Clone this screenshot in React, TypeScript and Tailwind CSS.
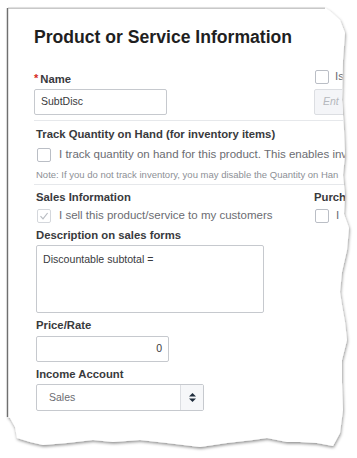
import React from "react";

const paperPath =
  "M8,8 L325,8 L330,11 L340,20 L345,33 L343,60 L342,100 L344,130 L345,155 L343,175 L345,195 L344,214 L349,228 L347,250 L342,272 L340,292 L342,305 L345,322 L347,340 L342,360 L342,383 L343,410 L340,433 L333,446 L317,443 L300,442 L287,442 L267,438 L253,440 L227,443 L200,447 L167,443 L140,440 L113,442 L93,440 L67,443 L43,445 L30,442 L17,438 L15,427 L10,418 L8,417 Z";

function Checkbox({ checked = false }: { checked?: boolean }) {
  return (
    <span
      className={`flex h-[14px] w-[14px] shrink-0 items-center justify-center rounded-[2px] border bg-white ${
        checked ? "border-[#d4d7dc]" : "border-[#babec5]"
      }`}
    >
      {checked && (
        <svg width="10" height="10" viewBox="0 0 10 10">
          <path d="M1.5 5.2 L4 7.8 L8.6 2" fill="none" stroke="#b8bcc2" strokeWidth="1.2" />
        </svg>
      )}
    </span>
  );
}

function Label({ children }: { children: React.ReactNode }) {
  return (
    <div className="h-[14px] text-[11.3px] leading-[14px] font-bold whitespace-nowrap text-[#393a3d]">
      {children}
    </div>
  );
}

export default function App() {
  return (
    <div className="relative h-[458px] w-[357px] overflow-hidden bg-white font-['Liberation_Sans',Arial,sans-serif]">
      {/* torn paper */}
      <svg className="absolute inset-0" width="357" height="458" viewBox="0 0 357 458">
        <defs>
          <clipPath id="paper" clipPathUnits="userSpaceOnUse">
            <path d={paperPath} />
          </clipPath>
          <filter id="shade" x="-10%" y="-10%" width="120%" height="120%">
            <feDropShadow dx="0.6" dy="1.6" stdDeviation="1.8" floodColor="#000" floodOpacity="0.45" />
          </filter>
        </defs>
        <path d={paperPath} fill="#fff" filter="url(#shade)" />
        <path d="M7.5,8 L7.5,417" stroke="#6f6f6f" strokeWidth="1.4" />
        <path d="M8,8.2 L325,8.2" stroke="#9a9a9a" strokeWidth="0.8" />
      </svg>

      <div className="relative h-full pl-[34px] pt-[27px] [clip-path:url(#paper)]">
        <h1 className="h-[20px] text-[17.6px] leading-[20px] font-bold whitespace-nowrap text-[#1f1f1f]">
          Product or Service Information
        </h1>

        {/* Name row */}
        <div className="mt-[23px] flex items-end">
          <div className="w-[280px] shrink-0">
            <div className="flex h-[14px] items-center text-[11.3px] leading-[14px] font-bold text-[#393a3d]">
              <span className="-mt-[3px] mr-[2px] text-[11px] text-[#d52b1e]">*</span>
              Name
            </div>
            <div className="mt-[3px] flex h-[26px] w-[133px] items-center rounded-[2px] border border-[#c6c9ce] pl-[6px] text-[10.5px] text-[#393a3d]">
              SubtDisc
            </div>
          </div>
          <div className="shrink-0">
            <div className="flex h-[14px] items-center gap-[6px] pl-[1px]">
              <Checkbox />
              <span className="text-[11.5px] text-[#6b6c72]">Is</span>
            </div>
            <div className="mt-[5px] flex h-[26px] w-[133px] items-center rounded-[2px] border border-[#dcdee2] bg-[#f4f5f8] pl-[8px] text-[10.5px] italic text-[#b5b8bd]">
              Ent
            </div>
          </div>
        </div>

        <div className="mt-[5px] h-px bg-[#e6e8eb]" />

        {/* Track quantity */}
        <div className="ml-[2px] mt-[6px]">
          <Label>Track Quantity on Hand (for inventory items)</Label>
          <div className="mt-[7px] flex h-[14px] items-center gap-[8px] pl-[1px]">
            <Checkbox />
            <span className="text-[11.5px] whitespace-nowrap text-[#6b6c72]">
              I track quantity on hand for this product. This enables inv
            </span>
          </div>
          <div className="mt-[7px] h-[12px] text-[9.5px] leading-[12px] whitespace-nowrap text-[#8d9096]">
            Note: If you do not track inventory, you may disable the Quantity on Han
          </div>
        </div>

        <div className="mt-[3px] h-px bg-[#e6e8eb]" />

        {/* Sales / Purchasing */}
        <div className="mt-[5px] flex">
          <div className="ml-[2px] w-[278px] shrink-0">
            <Label>Sales Information</Label>
            <div className="mt-[5px] flex h-[14px] items-center gap-[8px] pl-[1px]">
              <Checkbox checked />
              <span className="text-[11.5px] whitespace-nowrap text-[#6b6c72]">
                I sell this product/service to my customers
              </span>
            </div>
          </div>
          <div className="shrink-0">
            <Label>Purch</Label>
            <div className="mt-[5px] flex h-[14px] items-center gap-[7px] pl-[1px]">
              <Checkbox />
              <span className="text-[11.5px] whitespace-nowrap text-[#6b6c72]">I</span>
            </div>
          </div>
        </div>

        <div className="ml-[2px]">
          <div className="mt-[5px]">
            <Label>Description on sales forms</Label>
          </div>
          <div className="mt-[3px] h-[68px] w-[228px] rounded-[2px] border border-[#c6c9ce] px-[6px] pt-[7px] text-[10.6px] leading-[13px] text-[#393a3d]">
            Discountable subtotal =
          </div>

          <div className="mt-[5px]">
            <Label>Price/Rate</Label>
          </div>
          <div className="mt-[4px] flex h-[26px] w-[133px] items-center justify-end rounded-[2px] border border-[#c6c9ce] pr-[6px] text-[10.5px] text-[#393a3d]">
            0
          </div>

          <div className="mt-[5px]">
            <Label>Income Account</Label>
          </div>
          <div className="mt-[3px] flex h-[27px] w-[168px] rounded-[2px] border border-[#c6c9ce]">
            <div className="flex flex-1 items-center pl-[12px] text-[10.5px] text-[#6b6c72]">Sales</div>
            <div className="flex w-[23px] items-center justify-center border-l border-[#dcdee2] bg-[#f6f7f9]">
              <svg width="7" height="9" viewBox="0 0 7 9">
                <path d="M0 3.6 L3.5 0 L7 3.6 Z" fill="#1f2d3d" />
                <path d="M0 5.4 L7 5.4 L3.5 9 Z" fill="#1f2d3d" />
              </svg>
            </div>
          </div>
        </div>
      </div>
    </div>
  );
}
